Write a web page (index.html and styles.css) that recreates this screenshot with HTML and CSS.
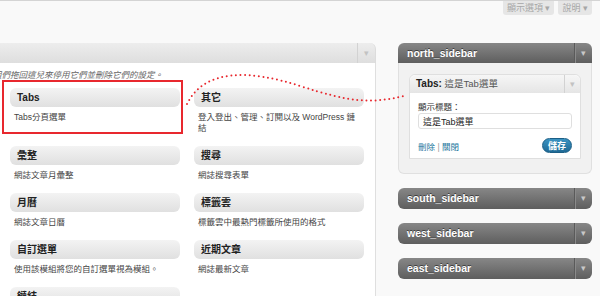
FILE: index.html
```html
<!DOCTYPE html>
<html lang="zh-Hant">
<head>
    <meta charset="UTF-8">
    <meta name="viewport" content="width=device-width, initial-scale=1.0">
    <title>模組</title>
    <link rel="stylesheet" href="styles.css">
</head>
<body>
    <div class="screen-meta">
        <span class="meta-tab">顯示選項 ▾</span>
        <span class="meta-tab">說明 ▾</span>
    </div>

    <div class="columns">
        <div class="available">
            <div class="panel-head">
                <span class="panel-title"></span>
                <span class="toggle light">▾</span>
            </div>
            <div class="panel-body">
                <p class="hint">將模組們拖回這兒來停用它們並刪除它們的設定。</p>

                <div class="widget-grid">
                    <div class="widget">
                        <div class="widget-top">Tabs</div>
                        <div class="widget-desc">Tabs分頁選單</div>
                    </div>
                    <div class="widget">
                        <div class="widget-top">其它</div>
                        <div class="widget-desc">登入登出、管理、訂閱以及 WordPress 鏈結</div>
                    </div>
                    <div class="widget">
                        <div class="widget-top">彙整</div>
                        <div class="widget-desc">網誌文章月彙整</div>
                    </div>
                    <div class="widget">
                        <div class="widget-top">搜尋</div>
                        <div class="widget-desc">網誌搜尋表單</div>
                    </div>
                    <div class="widget">
                        <div class="widget-top">月曆</div>
                        <div class="widget-desc">網誌文章日曆</div>
                    </div>
                    <div class="widget">
                        <div class="widget-top">標籤雲</div>
                        <div class="widget-desc">標籤雲中最熱門標籤所使用的格式</div>
                    </div>
                    <div class="widget">
                        <div class="widget-top">自訂選單</div>
                        <div class="widget-desc">使用該模組將您的自訂選單視為模組。</div>
                    </div>
                    <div class="widget">
                        <div class="widget-top">近期文章</div>
                        <div class="widget-desc">網誌最新文章</div>
                    </div>
                    <div class="widget">
                        <div class="widget-top">鏈結</div>
                        <div class="widget-desc">網誌鏈結</div>
                    </div>
                </div>
            </div>
        </div>

        <div class="sidebars">
            <div class="sidebar open">
                <div class="sidebar-head">
                    <span class="sidebar-name">north_sidebar</span>
                    <span class="toggle dark">▾</span>
                </div>
                <div class="sidebar-body">
                    <div class="placed">
                        <div class="placed-top">
                            <span class="placed-title"><b>Tabs:</b> 這是Tab選單</span>
                            <span class="toggle light small">▾</span>
                        </div>
                        <div class="placed-inside">
                            <label class="field-label" for="tabTitle">顯示標題：</label>
                            <input class="field" id="tabTitle" type="text" value="這是Tab選單">
                            <div class="controls">
                                <span class="links"><a href="#">刪除</a> | <a href="#">關閉</a></span>
                                <button class="save">儲存</button>
                            </div>
                        </div>
                    </div>
                </div>
            </div>

            <div class="sidebar">
                <div class="sidebar-head closed">
                    <span class="sidebar-name">south_sidebar</span>
                    <span class="toggle dark">▾</span>
                </div>
            </div>
            <div class="sidebar">
                <div class="sidebar-head closed">
                    <span class="sidebar-name">west_sidebar</span>
                    <span class="toggle dark">▾</span>
                </div>
            </div>
            <div class="sidebar">
                <div class="sidebar-head closed">
                    <span class="sidebar-name">east_sidebar</span>
                    <span class="toggle dark">▾</span>
                </div>
            </div>
        </div>
    </div>

    <!-- annotation: red box round the Tabs widget and dotted drag path -->
    <div class="mark-box"></div>
    <svg class="drag-path" width="600" height="296" viewBox="0 0 600 296">
        <path d="M187,104 C205,68 250,70 300,86 S370,104 404,96" fill="none" stroke="#e8282e" stroke-width="2" stroke-dasharray="0 4.6" stroke-linecap="round"/>
    </svg>
</body>
</html>
```

FILE: styles.css
```css
body {
    margin: 0;
    background-color: #f9f9f9;
    border-top: 1px solid #d4d4d4;
    font-family: 'Liberation Sans', 'Noto Sans CJK TC', sans-serif;
    font-size: 8.5px;
    color: #333;
    height: 295px;
    overflow: hidden;
    position: relative;
}

.screen-meta {
    height: 42px;
    display: flex;
    justify-content: flex-end;
    align-items: flex-start;
    gap: 4px;
    padding-right: 8px;
}

.meta-tab {
    height: 14px;
    line-height: 14px;
    padding: 0 4px;
    background-color: #e6e6e6;
    color: #a6a6a6;
    font-size: 9px;
    border-radius: 0 0 3px 3px;
}

.columns {
    display: flex;
    align-items: flex-start;
}

/* available widgets */
.available {
    width: 376px;
    flex-shrink: 0;
}

.panel-head {
    height: 20px;
    display: flex;
    justify-content: space-between;
    background: linear-gradient(#ededed, #dedede);
    border-radius: 0 6px 0 0;
    border-right: 1px solid #dcdcdc;
}

.panel-body {
    background-color: #fff;
    border-right: 1px solid #dfdfdf;
    padding-top: 7px;
    height: 248px;
}

.hint {
    margin: 0 0 7px -24px;
    line-height: 11px;
    font-style: italic;
    color: #666;
    white-space: nowrap;
}

.widget-grid {
    display: grid;
    grid-template-columns: 170px 170px;
    column-gap: 14px;
    margin-left: 10px;
}

.widget-top {
    height: 19px;
    line-height: 19px;
    padding-left: 7px;
    font-size: 10px;
    font-weight: bold;
    color: #222;
    background: linear-gradient(#f3f3f3, #e0e0e0);
    border-radius: 6px;
}

.widget-desc {
    padding: 5px 8px 12px 4px;
    line-height: 11px;
    color: #444;
}

.toggle {
    width: 17px;
    text-align: center;
    font-size: 9px;
}

.toggle.light {
    color: #c2c2c2;
    border-left: 1px solid #d2d2d2;
    line-height: 20px;
}

.toggle.dark {
    color: #c8c8c8;
    border-left: 1px solid #5a5a5a;
    box-shadow: inset 1px 0 0 #8a8a8a;
}

.toggle.small {
    width: 15px;
    line-height: 18px;
}

/* sidebars */
.sidebars {
    width: 194px;
    margin-left: 22px;
    display: flex;
    flex-direction: column;
    gap: 14px;
}

.sidebar-head {
    height: 20px;
    line-height: 20px;
    display: flex;
    justify-content: space-between;
    background: linear-gradient(#878787, #5e5e5e);
    border-radius: 6px 6px 0 0;
    color: #fff;
}

.sidebar-head.closed {
    height: 21px;
    line-height: 21px;
    border-radius: 6px;
}

.sidebar-name {
    padding-left: 9px;
    font-size: 10.5px;
    font-weight: bold;
    text-shadow: 0 -1px 0 #3d3d3d;
}

.sidebar-body {
    background-color: #f1f1f1;
    border: 1px solid #e0e0e0;
    border-top: none;
    border-radius: 0 0 6px 6px;
    padding: 11px 10px 14px;
}

.placed {
    border: 1px solid #dfdfdf;
    border-radius: 6px 6px 0 0;
    background-color: #fff;
}

.placed-top {
    height: 18px;
    line-height: 18px;
    display: flex;
    justify-content: space-between;
    background: linear-gradient(#f6f6f6, #e5e5e5);
    border-radius: 6px 6px 0 0;
}

.placed-title {
    padding-left: 6px;
    font-size: 9.5px;
    color: #555;
}

.placed-title b {
    font-size: 10px;
    color: #222;
}

.placed-inside {
    padding: 9px 8px 5px 8px;
}

.field-label {
    display: block;
    line-height: 11px;
    color: #333;
}

.field {
    display: block;
    box-sizing: border-box;
    width: 100%;
    height: 16px;
    margin: 0;
    padding: 0 4px;
    border: 1px solid #dfdfdf;
    border-radius: 3px;
    font-family: inherit;
    font-size: 9px;
    color: #222;
}

.controls {
    display: flex;
    justify-content: space-between;
    align-items: center;
    margin-top: 9px;
}

.links {
    color: #999;
}

.links a {
    color: #21759b;
    text-decoration: none;
}

.save {
    width: 30px;
    height: 15px;
    padding: 0;
    border: 1px solid #1c5f86;
    border-radius: 8px;
    background: linear-gradient(#3b93c2, #1f6a95);
    color: #fff;
    font-family: inherit;
    font-size: 9px;
    font-weight: bold;
}

/* annotation overlay */
.mark-box {
    position: absolute;
    left: 2px;
    top: 79px;
    width: 177px;
    height: 50px;
    border: 2px solid #e8282e;
}

.drag-path {
    position: absolute;
    left: 0;
    top: -1px;
    pointer-events: none;
}
```
